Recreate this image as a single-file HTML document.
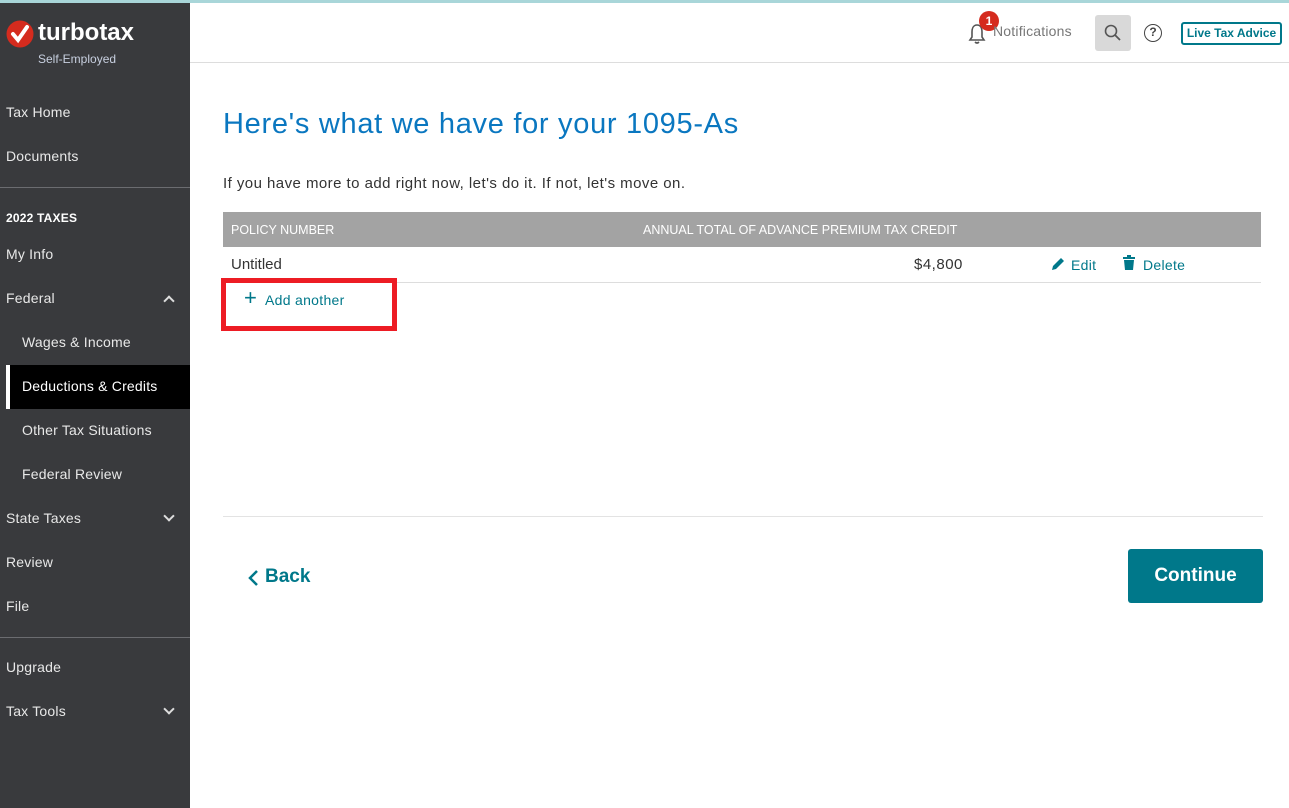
<!DOCTYPE html>
<html><head><meta charset="utf-8"><style>
*{margin:0;padding:0;box-sizing:border-box}
body{width:1289px;height:808px;overflow:hidden;font-family:"Liberation Sans",sans-serif;background:#fff;position:relative}
.topline{position:absolute;left:0;top:0;width:1289px;height:3px;background:#a9d6d9}
.side{position:absolute;left:0;top:3px;width:190px;height:805px;background:#393a3d;color:#fff}
.side .it{position:absolute;left:6px;font-size:14px;color:#e8e8e8;letter-spacing:0.2px}
.side .sub{left:22px}
.hr{position:absolute;left:0;width:190px;height:1px;background:#6b6c70}
.chev{position:absolute;left:165px;width:8px;height:8px;border-right:2px solid #ddd;border-bottom:2px solid #ddd}
.main{position:absolute;left:190px;top:3px;right:0}
.teal{color:#00788a}
</style></head><body>
<div class="topline"></div>
<div class="side">
  <svg style="position:absolute;left:6px;top:17px" width="28" height="28"><circle cx="14" cy="14" r="13.5" fill="#d52b1e"/><path d="M7 14 L12 20 L21 7" stroke="#fff" stroke-width="4" fill="none" stroke-linecap="round"/></svg>
  <div style="position:absolute;left:38px;top:16px;font-size:24px;font-weight:bold;letter-spacing:0px">turbotax</div>
  <div style="position:absolute;left:38px;top:49px;font-size:12px;color:#c8d0e0">Self-Employed</div>
  <div class="it" style="top:101px">Tax Home</div>
  <div class="it" style="top:145px">Documents</div>
  <div class="hr" style="top:184px"></div>
  <div class="it" style="top:208px;font-size:12px;font-weight:bold;color:#fff">2022 TAXES</div>
  <div class="it" style="top:243px">My Info</div>
  <div class="it" style="top:287px">Federal</div>
  <div class="chev" style="top:294px;transform:rotate(-135deg)"></div>
  <div class="it sub" style="top:331px">Wages &amp; Income</div>
  <div style="position:absolute;left:6px;top:362px;width:184px;height:44px;background:#000;border-left:4px solid #fff"></div>
  <div class="it sub" style="top:375px;color:#fff">Deductions &amp; Credits</div>
  <div class="it sub" style="top:419px">Other Tax Situations</div>
  <div class="it sub" style="top:463px">Federal Review</div>
  <div class="it" style="top:507px">State Taxes</div>
  <div class="chev" style="top:509px;transform:rotate(45deg)"></div>
  <div class="it" style="top:551px">Review</div>
  <div class="it" style="top:595px">File</div>
  <div class="hr" style="top:634px"></div>
  <div class="it" style="top:656px">Upgrade</div>
  <div class="it" style="top:700px">Tax Tools</div>
  <div class="chev" style="top:702px;transform:rotate(45deg)"></div>
</div>
<div class="main">
  <div style="position:absolute;left:0;top:59px;width:1099px;height:1px;background:#ddd"></div>
  <svg style="position:absolute;left:778px;top:20px" width="18" height="22"><path d="M9 2 C5 2 4 6 4 9 L4 14 L2 17 L16 17 L14 14 L14 9 C14 6 13 2 9 2 Z M7 19 Q9 21 11 19" stroke="#555" stroke-width="1.6" fill="none"/></svg>
  <div style="position:absolute;left:789px;top:8px;width:20px;height:20px;border-radius:50%;background:#d52b1e;color:#fff;font-size:12px;font-weight:bold;text-align:center;line-height:20px">1</div>
  <div style="position:absolute;left:803px;top:20px;font-size:14px;color:#777;letter-spacing:0.2px">Notifications</div>
  <div style="position:absolute;left:905px;top:12px;width:36px;height:36px;background:#d9d9d9;border-radius:3px"></div>
  <svg style="position:absolute;left:913px;top:20px" width="20" height="20"><circle cx="8" cy="8" r="5.5" stroke="#555" stroke-width="1.6" fill="none"/><path d="M12 12 L17 17" stroke="#555" stroke-width="1.8"/></svg>
  <div style="position:absolute;left:954px;top:21px;width:18px;height:18px;border:1.6px solid #444;border-radius:50%;font-size:12px;font-weight:bold;text-align:center;line-height:15px;color:#444">?</div>
  <div style="position:absolute;left:991px;top:19px;width:101px;height:23px;border:2px solid #00788a;border-radius:3px;font-size:12px;font-weight:bold;color:#00788a;text-align:center;line-height:19px">Live Tax Advice</div>

  <div style="position:absolute;left:33px;top:105px;font-size:29px;color:#0a77c0;letter-spacing:0.7px">Here's what we have for your 1095-As</div>
  <div style="position:absolute;left:33px;top:172px;font-size:15px;color:#333;letter-spacing:0.45px">If you have more to add right now, let's do it. If not, let's move on.</div>
  <div style="position:absolute;left:33px;top:209px;width:1038px;height:35px;background:#a3a3a3;color:#fff;font-size:12.5px">
    <span style="position:absolute;left:8px;top:11px">POLICY NUMBER</span>
    <span style="position:absolute;left:420px;top:11px">ANNUAL TOTAL OF ADVANCE PREMIUM TAX CREDIT</span>
  </div>
  <div style="position:absolute;left:41px;top:253px;font-size:15px;color:#333">Untitled</div>
  <div style="position:absolute;left:724px;top:253px;font-size:15px;color:#333;letter-spacing:0.5px">$4,800</div>
  <svg style="position:absolute;left:860px;top:253px" width="16" height="16"><path d="M2 14 L3 10 L11 2 L14 5 L6 13 Z" fill="#00788a"/></svg>
  <div class="teal" style="position:absolute;left:881px;top:254px;font-size:14px;letter-spacing:0.3px">Edit</div>
  <svg style="position:absolute;left:932px;top:252px" width="14" height="16"><rect x="1" y="2" width="12" height="2" fill="#00788a"/><rect x="5" y="0" width="4" height="2" fill="#00788a"/><path d="M2 5 L12 5 L11 15 L3 15 Z" fill="#00788a"/></svg>
  <div class="teal" style="position:absolute;left:953px;top:254px;font-size:14px;letter-spacing:0.3px">Delete</div>
  <div style="position:absolute;left:33px;top:279px;width:1038px;height:1px;background:#ddd"></div>
  <div style="position:absolute;left:31px;top:275px;width:176px;height:53px;border:5px solid #ed1c24"></div>
  <div class="teal" style="position:absolute;left:54px;top:282px;font-size:22px">+</div>
  <div class="teal" style="position:absolute;left:75px;top:289px;font-size:14px;letter-spacing:0.3px">Add another</div>
  <div style="position:absolute;left:33px;top:513px;width:1040px;height:1px;background:#e3e3e3"></div>
  <svg style="position:absolute;left:57px;top:566px" width="12" height="18"><path d="M10 2 L3 9 L10 16" stroke="#00788a" stroke-width="2.5" fill="none"/></svg>
  <div class="teal" style="position:absolute;left:75px;top:563px;font-size:19px;font-weight:bold">Back</div>
  <div style="position:absolute;left:938px;top:546px;width:135px;height:54px;background:#00788a;border-radius:3px;color:#fff;font-size:19px;font-weight:bold;text-align:center;line-height:54px">Continue</div>
</div>
</body></html>
